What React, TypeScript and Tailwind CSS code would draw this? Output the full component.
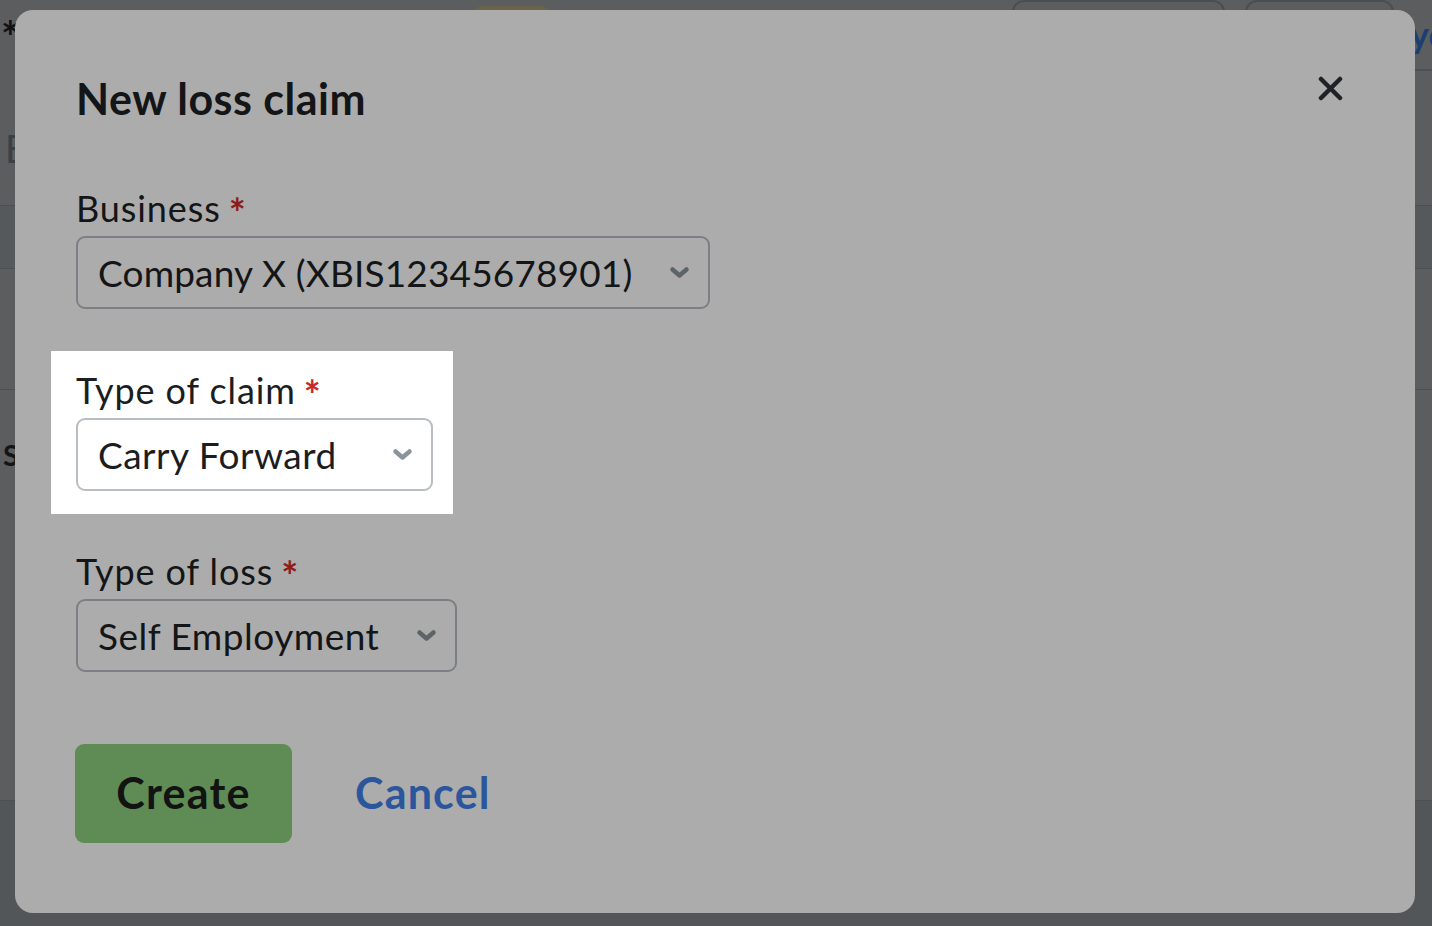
import { ReactNode } from 'react'

const font = { fontFamily: 'Lato, "Noto Sans", sans-serif' }

function Chevron({ color }: { color: string }) {
  return (
    <svg width="21" height="13" viewBox="0 0 21 13" fill="none" className="shrink-0">
      <polyline
        points="3.5,3.5 10.5,9.5 17.5,3.5"
        stroke={color}
        strokeWidth="4.5"
        strokeLinecap="round"
        strokeLinejoin="round"
      />
    </svg>
  )
}

interface FieldProps {
  label: string
  value: string
  width: string
  tracking: string
  lit?: boolean
}

function Field({ label, value, width, tracking, lit }: FieldProps) {
  return (
    <div>
      <div className={`h-[42px] text-[36px] leading-[42px] tracking-[0.9px] ${lit ? 'text-[#1b1d1f]' : 'text-[#141516]'}`}>
        {label}
        <span
          className={`ml-[8px] align-[-6px] text-[40px] leading-none font-bold ${lit ? 'text-[#c9282a]' : 'text-[#8f1b1b]'}`}
        >
          *
        </span>
      </div>
      <div
        className={`mt-[7px] flex h-[73px] items-center justify-between rounded-[9px] border-2 pl-[20px] pr-[18px] ${width} ${
          lit ? 'border-[#b8bdc1] bg-white' : 'border-[#7c8084]'
        }`}
      >
        <span className={`text-[37px] leading-none ${tracking} ${lit ? 'text-[#1b1d1f]' : 'text-[#141516]'}`}>
          {value}
        </span>
        <Chevron color={lit ? '#8a959b' : '#5d6468'} />
      </div>
    </div>
  )
}

function Row({ className, children }: { className: string; children?: ReactNode }) {
  return <div className={`border-t border-[#4d5053] ${className}`}>{children}</div>
}

export default function App() {
  return (
    <div className="relative h-[926px] w-full overflow-hidden bg-[#5c5d5f]" style={font}>
      {/* page behind the dialog */}
      <div className="flex flex-col">
        <div className="flex h-[71px]">
          <div className="flex flex-1 items-start">
            <span className="pl-[1px] pt-[14px] text-[44px] font-bold leading-none text-[#111213]">*</span>
            <div className="ml-[450px] mt-[6px] h-[30px] w-[83px] rounded-t-[14px] bg-[#6b6349]" />
            <div className="ml-[459px] h-[60px] w-[213px] rounded-[12px] border-2 border-[#4b4d4f]" />
            <div className="ml-[20px] h-[60px] w-[149px] rounded-[12px] border-2 border-[#4b4d4f]" />
          </div>
          <div className="w-[22px] overflow-hidden whitespace-nowrap border-b-2 border-[#4d5053] pt-[16px] text-[36px] font-bold leading-none text-[#1c3f73]">
            yc
          </div>
        </div>
        <div className="h-[134px] pl-[5px] pt-[58px] text-[38px] leading-none text-[#3b4046]">E</div>
        <Row className="h-[63px] bg-[#56595c]" />
        <Row className="h-[121px]" />
        <Row className="h-[411px] pl-[3px] pt-[50px] text-[29px] font-bold leading-none text-[#141516]">S</Row>
        <Row className="h-[200px] bg-[#535659]" />
      </div>

      {/* dialog */}
      <div className="absolute left-[15px] top-[10px] h-[903px] w-[1400px] rounded-[18px] bg-[#acacac] pl-[61px] pr-[72px] pt-[63px]">
        <div className="flex items-start justify-between">
          <h2 className="text-[43px] font-bold leading-[1.2] tracking-[0.5px] text-[#141516]">New loss claim</h2>
          <svg width="25" height="25" viewBox="0 0 25 25" className="mt-[3px]">
            <path d="M3 3 L22 22 M22 3 L3 22" stroke="#1e2226" strokeWidth="4.5" strokeLinecap="round" />
          </svg>
        </div>

        <div className="mt-[62px]">
          <Field label="Business" value="Company X (XBIS12345678901)" width="w-[634px]" tracking="tracking-[0.15px]" />
        </div>

        <div className="-ml-[25px] mt-[42px] w-[402px] bg-white pb-[23px] pl-[25px] pt-[18px]">
          <Field label="Type of claim" value="Carry Forward" width="w-[357px]" tracking="tracking-[0.5px]" lit />
        </div>

        <div className="mt-[36px]">
          <Field label="Type of loss" value="Self Employment" width="w-[381px]" tracking="tracking-[0.5px]" />
        </div>

        <div className="mt-[72px] flex items-center">
          <button className="-ml-[1px] flex h-[99px] w-[217px] items-center justify-center rounded-[9px] bg-[#5f8c54] text-[43px] font-bold tracking-[1.2px] text-[#121312]">
            Create
          </button>
          <button className="ml-[63px] text-[43px] font-bold tracking-[1.2px] text-[#2b569c]">Cancel</button>
        </div>
      </div>
    </div>
  )
}
